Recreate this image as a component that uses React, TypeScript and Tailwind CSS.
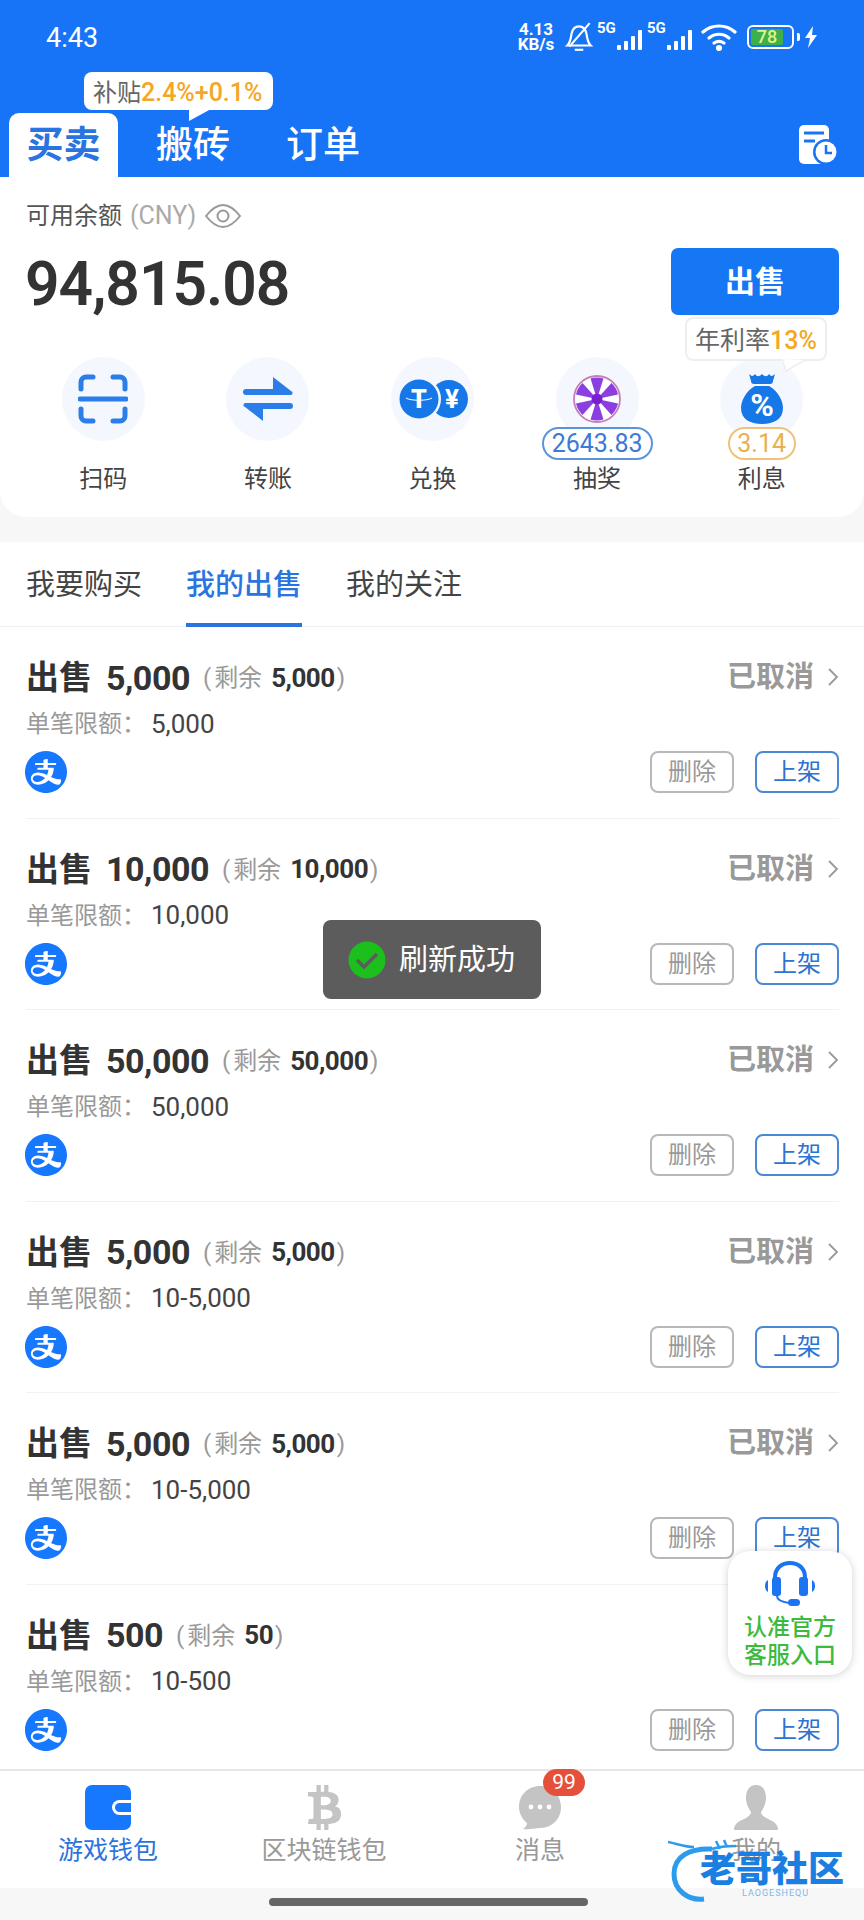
import React from 'react';
import { FaBtc } from 'react-icons/fa';
import { AiFillAlipayCircle } from 'react-icons/ai';

interface SellItem {
  total: string;
  left: string;
  limit: string;
  cancelled: boolean;
}

const sells: SellItem[] = [
  { total: '5,000', left: '5,000', limit: '5,000', cancelled: true },
  { total: '10,000', left: '10,000', limit: '10,000', cancelled: true },
  { total: '50,000', left: '50,000', limit: '50,000', cancelled: true },
  { total: '5,000', left: '5,000', limit: '10-5,000', cancelled: true },
  { total: '5,000', left: '5,000', limit: '10-5,000', cancelled: true },
  { total: '500', left: '50', limit: '10-500', cancelled: false },
];

const StatusIcons = () => (
  <div className="flex items-center text-white">
    <div className="w-[42px] text-[17px] leading-[15px] font-bold text-center">
      <div>4.13</div>
      <div>KB/s</div>
    </div>
    <svg className="ml-[7px]" width="30" height="32" viewBox="0 0 28 30" fill="none" stroke="currentColor" strokeWidth="2">
      <path d="M3 23c3-3 3-6 4-11 1-5 4-7 7-7s6 2 7 7c1 5 1 8 4 11z" />
      <path d="M10 27h8" />
      <path d="M24 2 5 24" />
    </svg>
    <Signal className="ml-[3px]" />
    <Signal className="ml-[5px]" />
    <svg className="ml-[9px]" width="36" height="28" viewBox="0 0 36 28" fill="none" stroke="currentColor" strokeWidth="3.2" strokeLinecap="round">
      <path d="M2 9c9-8 23-8 32 0" />
      <path d="M8 15c6-5 14-5 20 0" />
      <path d="M13 20c3-2 7-2 10 0" />
      <circle cx="18" cy="25" r="1.5" fill="currentColor" />
    </svg>
    <div className="ml-[10px] w-[47px] h-[24px] rounded-[6px] border-2 border-white p-[2px] flex">
      <div className="w-[32px] h-full bg-[#3eb049] rounded-[2px] text-[#dcf58c] text-[18px] leading-[16px] text-center font-medium">78</div>
    </div>
    <div className="ml-[3px] w-[3px] h-[8px] bg-white rounded-r-[2px]" />
    <svg className="ml-[5px]" width="12" height="22" viewBox="0 0 12 22" fill="currentColor">
      <path d="M8 0 0 12h5l-2 10 9-13H7z" />
    </svg>
  </div>
);

const Signal = ({ className }: { className?: string }) => (
  <div className={`relative w-[45px] h-[28px] ${className}`}>
    <span className="absolute left-0 top-[-3px] text-[15px] leading-[16px] font-bold">5G</span>
    <div className="absolute right-0 bottom-[1px] flex items-end gap-[3px]">
      <div className="w-[4px] h-[5px] bg-white rounded-[1px]" />
      <div className="w-[4px] h-[9px] bg-white rounded-[1px]" />
      <div className="w-[4px] h-[14px] bg-white rounded-[1px]" />
      <div className="w-[4px] h-[20px] bg-white rounded-[1px]" />
    </div>
  </div>
);

const ScanIcon = () => (
  <svg width="50" height="50" viewBox="0 0 50 50" fill="none" stroke="#2b7de9" strokeWidth="5" strokeLinecap="round">
    <path d="M3 15V8a5 5 0 0 1 5-5h7" />
    <path d="M35 3h7a5 5 0 0 1 5 5v7" />
    <path d="M3 35v7a5 5 0 0 0 5 5h7" />
    <path d="M35 47h7a5 5 0 0 0 5-5v-7" />
    <path d="M2 25h46" />
  </svg>
);

const SwapIcon = () => (
  <svg width="50" height="44" viewBox="0 0 50 44" fill="#2b7de9">
    <path d="M30 0 48 14a2 2 0 0 1-1 4H3a2.5 2.5 0 0 1 0-6h27z" />
    <path d="M20 44 2 30a2 2 0 0 1 1-4h44a2.5 2.5 0 0 1 0 6H20z" />
  </svg>
);

const CoinsIcon = () => (
  <svg className="ml-[3px]" width="70" height="40" viewBox="0 0 70 40">
    <circle cx="50" cy="20" r="19" fill="#1677e8" />
    <circle cx="20" cy="20" r="22" fill="#f4f8fe" />
    <circle cx="20" cy="20" r="19.5" fill="#1677e8" />
    <path d="M7 19c4 3 22 3 26 0" fill="none" stroke="#fff" strokeWidth="1" />
    <text x="20" y="29" textAnchor="middle" fontSize="25" fontWeight="900" fill="#fff" fontFamily="Roboto">T</text>
    <text x="53" y="29" textAnchor="middle" fontSize="26" fontWeight="700" fill="#fff" fontFamily="Roboto">¥</text>
  </svg>
);

const WheelIcon = () => (
  <svg width="48" height="48" viewBox="-24 -24 48 48">
    <circle r="23" fill="#fff" stroke="#c77fb8" strokeWidth="1.8" />
    {[0, 60, 120, 180, 240, 300].map((a) => (
      <path key={a} d="M0 0-6.5-20.5A21.5 21.5 0 0 1 6.5-20.5Z" fill="#8b3fe0" transform={`rotate(${a})`} />
    ))}
    <circle r="5.5" fill="#7a1fd0" />
  </svg>
);

const BagIcon = () => (
  <svg width="44" height="52" viewBox="0 0 44 52">
    <path d="M9 1c2 2 4 3 6 0 2 3 4 3 7 0 3 3 5 3 7 0 2 3 4 2 6 0l-2 7a3 3 0 0 1-3 3H14a3 3 0 0 1-3-3z" fill="#1677e8" />
    <path d="M15 13h14c9 5 14 15 14 22 0 11-9 16-21 16S1 46 1 35c0-7 5-17 14-22z" fill="#1677e8" />
    <text x="22" y="43" textAnchor="middle" fontSize="32" fontWeight="700" fill="#fff" fontFamily="Roboto">%</text>
  </svg>
);

const actions = [
  { label: '扫码', icon: <ScanIcon /> },
  { label: '转账', icon: <SwapIcon /> },
  { label: '兑换', icon: <CoinsIcon /> },
  { label: '抽奖', icon: <WheelIcon />, pill: '2643.83', pillClass: 'border-[#5b93dc] text-[#3a7bd5] w-[111px]' },
  { label: '利息', icon: <BagIcon />, pill: '3.14', pillClass: 'border-[#eec27a] text-[#e9b04f] w-[68px]' },
];

const SellRow = ({ item, last }: { item: SellItem; last: boolean }) => (
  <div className="pl-[26px] pr-[25px] h-[191.5px] shrink-0">
    <div className={`h-full flex flex-col pt-[31px] ${last ? '' : 'border-b border-[#f2f2f2]'}`}>
      <div className="flex items-center h-[40px] text-[#333]">
        <span className="text-[33px] font-bold">出售</span>
        <span className="ml-[14px] text-[34px] font-bold tracking-[-0.5px]">{item.total}</span>
        <span className="ml-[13px] text-[24px] text-[#999]">(</span>
        <span className="ml-[3px] text-[24px] text-[#999]">剩余</span>
        <span className="ml-[9px] text-[26px] font-bold tracking-[-0.5px]">{item.left}</span>
        <span className="ml-[2px] text-[24px] text-[#999]">)</span>
        {item.cancelled && (
          <div className="ml-auto flex items-center text-[#999]">
            <span className="text-[29px] font-bold">已取消</span>
            <svg className="ml-[13px] mb-[2px]" width="12" height="20" viewBox="0 0 12 20" fill="none" stroke="#999" strokeWidth="1.8">
              <path d="m2 2 8 8-8 8" />
            </svg>
          </div>
        )}
      </div>
      <div className="mt-[11px] h-[30px] flex items-center text-[24px] text-[#999]">
        单笔限额：<span className="ml-[5px] text-[#444] text-[26px]">{item.limit}</span>
      </div>
      <div className="mt-[12px] flex items-center justify-between">
        <AiFillAlipayCircle className="text-[#1677ff] -ml-[4px] w-[48px] h-[48px] -my-[3px]" />
        <div className="flex gap-[21px]">
          <button className="w-[84px] h-[42px] rounded-[8px] border-2 border-[#b8b8b8] text-[#999] text-[24px]">删除</button>
          <button className="w-[84px] h-[42px] rounded-[8px] border-2 border-[#4a88d6] text-[#2b74cf] text-[24px]">上架</button>
        </div>
      </div>
    </div>
  </div>
);

const App: React.FC = () => {
  return (
    <div className="relative w-[864px] h-[1920px] overflow-hidden bg-[#f7f7f7] flex flex-col font-[Roboto,'Noto_Sans_CJK_SC',sans-serif]">
      {/* header */}
      <div className="relative h-[177px] shrink-0 bg-[#1874f6] flex flex-col">
        <div className="h-[73px] flex items-center justify-between pl-[46px] pr-[47px]">
          <span className="text-white text-[27px] pt-[4px]">4:43</span>
          <StatusIcons />
        </div>
        <div className="flex-1 flex items-end pl-[9px] pr-[26px]">
          <div className="w-[109px] h-[64px] rounded-t-[10px] bg-white text-[#2a74e0] text-[37px] font-bold text-center leading-[66px]">买卖</div>
          <div className="ml-[38px] h-[64px] text-white text-[37px] leading-[66px] font-medium">搬砖</div>
          <div className="ml-[56px] h-[64px] text-white text-[37px] leading-[66px] font-medium">订单</div>
          <svg className="ml-auto mb-[12px]" width="40" height="40" viewBox="0 0 40 40">
            <rect x="1" y="0" width="30" height="39" rx="5" fill="#fff" />
            <path d="M6 8h20M6 16h11" stroke="#1874f6" strokeWidth="3" />
            <circle cx="28" cy="27" r="13" fill="#1874f6" />
            <circle cx="28" cy="27" r="10.5" fill="#fff" />
            <path d="M28 20v8h6" fill="none" stroke="#1874f6" strokeWidth="2.5" />
          </svg>
        </div>
        <div className="absolute left-[84px] top-[72px] h-[38px] w-[189px] pl-[9px] pt-[4px] rounded-[8px] bg-white flex items-center text-[24px] whitespace-nowrap">
          <span className="text-[#666]">补贴</span>
          <span className="text-[#f5a623] text-[25px] font-medium">2.4%+0.1%</span>
          <svg className="absolute left-[105px] top-[37px]" width="22" height="12" viewBox="0 0 22 12" fill="#fff">
            <path d="M0 0h22L0 12z" />
          </svg>
        </div>
      </div>

      {/* balance card */}
      <div className="relative h-[340px] shrink-0 bg-white rounded-b-[26px] pl-[26px] pr-[25px]">
        <div className="pt-[23px] flex items-center h-[55px] text-[24px]">
          <span className="text-[#555]">可用余额</span>
          <span className="ml-[8px] text-[#aaa] text-[25px]">(CNY)</span>
          <svg className="ml-[9px]" width="36" height="24" viewBox="0 0 36 24" fill="none" stroke="#999" strokeWidth="2">
            <path d="M1 12C8 3 13 1 18 1s10 2 17 11c-7 9-12 11-17 11S8 21 1 12z" />
            <circle cx="18" cy="12" r="5.5" />
          </svg>
        </div>
        <div className="flex justify-between">
          <div className="mt-[17px] -ml-[1px] text-[60.5px] leading-[72px] font-semibold text-[#333] tracking-[-1px]">94,815.08</div>
          <button className="mt-[16px] w-[168px] h-[67px] rounded-[7px] bg-[#1677f5] text-white text-[30px] font-bold">出售</button>
        </div>
        <div className="mt-[36px] -mx-[5px] grid grid-cols-5">
          {actions.map((a) => (
            <div key={a.label} className="relative flex flex-col items-center">
              <div className="w-[83px] h-[84px] rounded-full bg-[#f4f8fe] flex items-center justify-center">{a.icon}</div>
              {a.pill && (
                <div className={`absolute top-[70px] h-[33px] rounded-full border-2 bg-white text-[25px] leading-[29px] text-center ${a.pillClass}`}>{a.pill}</div>
              )}
              <div className="mt-[21px] text-[24px] leading-[34px] text-[#444]">{a.label}</div>
            </div>
          ))}
        </div>
        <div className="absolute left-[685px] top-[140px] h-[44px] w-[142px] pt-[4px] rounded-[8px] border-2 border-[#eeeeee] bg-white flex items-center justify-center text-[25px]">
          <span className="text-[#666]">年利率</span>
          <span className="text-[#f5a623] font-medium">13%</span>
          <svg className="absolute left-[95px] top-[40px]" width="24" height="13" viewBox="0 0 24 13" fill="#fff" stroke="#eeeeee" strokeWidth="1.5">
            <path d="M0 0 4 12 23 1" />
          </svg>
        </div>
      </div>

      {/* list */}
      <div className="mt-[25px] flex-1 bg-white flex flex-col min-h-0">
        <div className="h-[85px] shrink-0 flex pl-[26px] gap-[44px] border-b border-[#f0f0f0] text-[29px] leading-[86px] text-[#444]">
          <div className="w-[116px] whitespace-nowrap">我要购买</div>
          <div className="relative w-[116px] whitespace-nowrap text-[#2a74e0] font-medium">
            我的出售
            <div className="absolute left-0 right-0 bottom-[-1px] h-[4px] bg-[#2a74e0]" />
          </div>
          <div className="w-[116px] whitespace-nowrap">我的关注</div>
        </div>
        <div className="flex-1 min-h-0">
          {sells.map((s, i) => (
            <SellRow key={i} item={s} last={i === sells.length - 1} />
          ))}
        </div>
      </div>

      {/* bottom nav */}
      <div className="h-[119px] shrink-0 bg-white border-t-2 border-[#e6e6e6] grid grid-cols-4 text-[25px] text-[#999]">
        <div className="flex flex-col items-center pt-[14px]">
          <div className="relative w-[46px] h-[45px] rounded-[7px] bg-[#1677ff]">
            <div className="absolute right-0 top-[15px] w-[19px] h-[15px] rounded-l-[8px] border-[3px] border-r-0 border-white bg-[#1677ff]" />
          </div>
          <div className="mt-[4px] leading-[34px] text-[#2a74e0]">游戏钱包</div>
        </div>
        <div className="flex flex-col items-center pt-[14px]">
          <FaBtc className="w-[45px] h-[45px] text-[#c4c4c4]" />
          <div className="mt-[4px] leading-[34px]">区块链钱包</div>
        </div>
        <div className="relative flex flex-col items-center pt-[14px]">
          <svg width="46" height="45" viewBox="0 0 46 45">
            <path d="M23 1c12 0 21 9 21 21s-9 21-21 21c-5 0-10 2-17 1 3-2 4-4 4-6C5 34 2 28 2 22 2 10 11 1 23 1z" fill="#c4c4c4" />
            <circle cx="14" cy="22" r="2.4" fill="#fff" />
            <circle cx="23" cy="22" r="2.4" fill="#fff" />
            <circle cx="32" cy="22" r="2.4" fill="#fff" />
          </svg>
          <div className="mt-[4px] leading-[34px]">消息</div>
          <div className="absolute left-[111px] top-[-2px] w-[42px] h-[27px] rounded-full bg-[#e5503a] text-white text-[21px] leading-[26px] text-center">99</div>
        </div>
        <div className="flex flex-col items-center pt-[14px]">
          <svg width="46" height="45" viewBox="0 0 46 45" fill="#c4c4c4">
            <path d="M23 0c7 0 10 6 10 13 0 6-3 11-5 14 0 3 3 5 9 8 5 2 8 5 8 10H1c0-5 3-8 8-10 6-3 9-5 9-8-2-3-5-8-5-14C13 6 16 0 23 0z" />
          </svg>
          <div className="mt-[4px] leading-[34px]">我的</div>
        </div>
      </div>
      <div className="h-[32px] shrink-0 flex justify-center pt-[10px] pr-[8px]">
        <div className="w-[319px] h-[8px] rounded-full bg-[#666]" />
      </div>

      {/* floating support entry */}
      <div className="absolute left-[728px] top-[1551px] w-[124px] h-[124px] rounded-[22px] bg-white shadow-[0_1px_8px_rgba(0,0,0,0.18)] flex flex-col items-center pt-[9px]">
        <svg width="54" height="46" viewBox="0 0 54 46">
          <path d="M12 26V17C12 8 19 3 27 3s15 5 15 14v9" fill="none" stroke="#1b74f0" strokeWidth="4" />
          <rect x="9" y="17" width="9" height="19" rx="3" fill="#1b74f0" />
          <rect x="36" y="17" width="9" height="19" rx="3" fill="#1b74f0" />
          <path d="M2 26c0-3 1-5 3-6v12c-2-1-3-3-3-6zM52 26c0-3-1-5-3-6v12c2-1 3-3 3-6z" fill="#1b74f0" />
          <path d="M14 36c0 4 5 6 12 7" fill="none" stroke="#1b74f0" strokeWidth="2" />
          <rect x="25" y="39" width="12" height="7" rx="3.5" fill="#1b74f0" />
        </svg>
        <div className="mt-[8px] text-[#3dba3d] text-[23px] leading-[28px] font-medium text-center">认准官方<br />客服入口</div>
      </div>

      {/* toast */}
      <div className="absolute left-[323px] top-[920px] w-[218px] h-[79px] rounded-[8px] bg-[#5c5c5c] flex items-center pl-[25px]">
        <svg width="38" height="38" viewBox="0 0 38 38">
          <circle cx="19" cy="19" r="18.5" fill="#1cc01c" />
          <path d="m9 19 7 7 13-13" fill="none" stroke="#5c5c5c" strokeWidth="3.5" />
        </svg>
        <span className="ml-[13px] pt-[3px] text-white text-[29px] whitespace-nowrap">刷新成功</span>
      </div>

      {/* watermark */}
      <div className="absolute left-[668px] top-[1838px] w-[190px] h-[70px]">
        <svg className="absolute left-0 top-0" width="80" height="70" viewBox="0 0 80 70" fill="none" stroke="#2a9bef" strokeWidth="5">
          <path d="M44 11C22 10 6 18 6 36c0 16 14 27 30 25" />
          <path d="M0 4c10 2 18 5 26 5M44 11c8-3 16-3 24-3M48 3l4 8M56 2l3 7" strokeWidth="2.5" />
        </svg>
        <div className="absolute left-[32px] top-[12px] text-[#1a7fe0] text-[36px] leading-[40px] font-black whitespace-nowrap">老哥社区</div>
        <div className="absolute left-[74px] top-[49px] text-[#7cb8ec] text-[9px] leading-[12px] tracking-[1px] whitespace-nowrap">LAOGESHEQU</div>
      </div>
    </div>
  );
};

export default App;
